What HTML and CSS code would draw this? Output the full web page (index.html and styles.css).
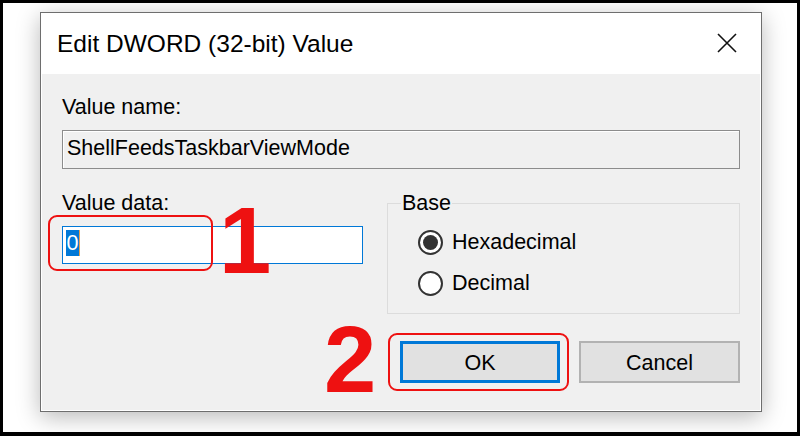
FILE: index.html
```html
<!DOCTYPE html>
<html lang="en">
<head>
    <meta charset="UTF-8">
    <meta name="viewport" content="width=device-width, initial-scale=1.0">
    <title>Edit DWORD (32-bit) Value</title>
    <link rel="stylesheet" href="styles.css">
</head>
<body>
    <div class="frame">
        <div class="dialog">
            <div class="titlebar">
                <span class="title">Edit DWORD (32-bit) Value</span>
                <svg class="close" width="20" height="20" viewBox="0 0 20 20">
                    <path d="M1 1 L19 19 M19 1 L1 19" stroke="#111" stroke-width="1.6" fill="none"/>
                </svg>
            </div>

            <div class="content">
                <div class="label">Value name:</div>
                <div class="name-field">ShellFeedsTaskbarViewMode</div>

                <div class="data-row">
                    <div class="data-col">
                        <div class="label">Value data:</div>
                        <div class="data-field"><span class="selected">0</span></div>
                    </div>

                    <fieldset class="base">
                        <legend>Base</legend>
                        <div class="radio-row">
                            <span class="radio checked"></span>
                            <span>Hexadecimal</span>
                        </div>
                        <div class="radio-row">
                            <span class="radio"></span>
                            <span>Decimal</span>
                        </div>
                    </fieldset>
                </div>

                <div class="buttons">
                    <div class="btn btn-default">OK</div>
                    <div class="btn">Cancel</div>
                </div>
            </div>

            <!-- red annotations drawn on top of the dialog -->
            <div class="mark mark-one"></div>
            <div class="step step-one">1</div>
            <div class="mark mark-two"></div>
            <div class="step step-two">2</div>
        </div>
    </div>
</body>
</html>
```

FILE: styles.css
```css
body {
    margin: 0;
    font-family: "Liberation Sans", Arial, sans-serif;
}
.frame {
    width: 800px;
    height: 436px;
    box-sizing: border-box;
    border: 3px solid #000;
    border-bottom-width: 4px;
    background-color: #fff;
    padding: 9px 0 0 37px;
    overflow: hidden;
}
.dialog {
    position: relative;
    width: 722px;
    box-sizing: border-box;
    border: 1px solid #6e6e6e;
    background-color: #fff;
    box-shadow: 0 5px 22px rgba(0, 0, 0, 0.28);
}
.titlebar {
    height: 61px;
    display: flex;
    align-items: center;
    justify-content: space-between;
    padding: 0 24px 0 16px;
}
.title {
    font-size: 24.5px;
    line-height: 30px;
    color: #000;
}
.close {
    display: block;
    margin-top: -2px;
}
.content {
    margin: 0 1px 1px;
    padding: 21px 20px 27px;
    background-color: #f0f0f0;
    font-size: 21.5px;
    line-height: 25px;
    color: #000;
}
.label {
    height: 25px;
}
.name-field {
    margin-top: 10px;
    height: 39px;
    box-sizing: border-box;
    border: 1px solid #8c8c8c;
    box-shadow: inset 1px 1px 0 #fff;
    padding: 5px 4px 0;
    white-space: nowrap;
}
.data-row {
    margin-top: 22px;
    display: grid;
    grid-template-columns: 301px 1fr;
    gap: 24px;
    align-items: start;
}
.data-field {
    margin-top: 10px;
    height: 38px;
    box-sizing: border-box;
    border: 1px solid #0078d7;
    background-color: #fff;
    padding: 3px 0 0 3px;
}
.selected {
    display: inline-block;
    height: 26px;
    line-height: 27px;
    padding: 0 0.5px;
    background-color: #0078d7;
    color: #fff;
    box-shadow: 1px 0 0 #e8a050;
}
.base {
    margin: 0;
    border: 1px solid #dcdcdc;
    padding: 6px 0 9px 30px;
    min-width: 0;
}
.base legend {
    margin-left: -17px;
    padding: 0 1px;
    line-height: 25px;
}
.radio-row {
    height: 41px;
    display: flex;
    align-items: center;
    gap: 9px;
}
.radio {
    width: 25px;
    height: 25px;
    box-sizing: border-box;
    border: 2px solid #333;
    border-radius: 50%;
    background-color: #fff;
    display: flex;
    align-items: center;
    justify-content: center;
}
.radio.checked::after {
    content: "";
    width: 15px;
    height: 15px;
    border-radius: 50%;
    background-color: #333;
}
.buttons {
    margin-top: 27px;
    display: flex;
    justify-content: flex-end;
    gap: 19px;
}
.btn {
    width: 161px;
    height: 42px;
    box-sizing: border-box;
    border: 2px solid #b2b2b2;
    background-color: #e1e1e1;
    display: flex;
    align-items: center;
    justify-content: center;
    padding-top: 2px;
}
.btn-default {
    width: 160px;
    border: 3px solid #0078d7;
}

/* annotations */
.mark {
    position: absolute;
    border: 2.5px solid #ee1111;
    border-radius: 9px;
    box-sizing: border-box;
}
.mark-one {
    left: 7px;
    top: 202px;
    width: 165px;
    height: 56px;
}
.mark-two {
    left: 347px;
    top: 320px;
    width: 181px;
    height: 58px;
}
.step {
    position: absolute;
    font-family: "Liberation Sans", Arial, sans-serif;
    font-weight: bold;
    font-size: 94px;
    line-height: 96px;
    color: #ee1111;
}
.step-one {
    left: 178px;
    top: 180px;
}
.step-two {
    left: 283px;
    top: 299px;
}
```
